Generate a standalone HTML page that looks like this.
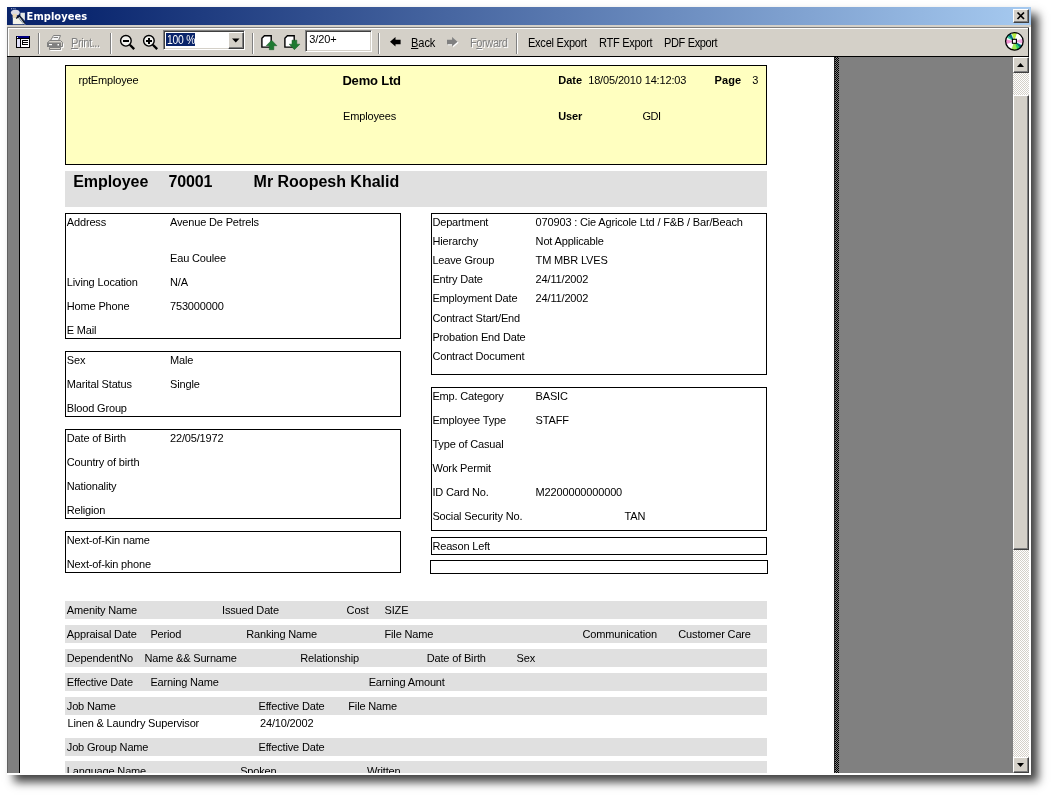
<!DOCTYPE html>
<html><head><meta charset="utf-8"><title>Employees</title>
<style>
*{box-sizing:border-box;margin:0;padding:0}
html,body{width:1054px;height:798px;background:#fff;overflow:hidden}
body{position:relative;font-family:"Liberation Sans",sans-serif;font-size:11px;color:#000}
div,span,svg{position:absolute}
#win{left:7px;top:7px;width:1024px;height:768px;background:#d4d0c8;box-shadow:7px 7px 9px 0 rgba(0,0,0,.75)}
#title{left:7px;top:7px;width:1024px;height:18px;background:linear-gradient(90deg,#0a246a 0%,#0c2870 8%,#a6caf0 100%)}
#sheet{left:20px;top:57px;width:814px;height:716px;background:#fff;overflow:hidden}
.t{white-space:pre;line-height:13px;font-size:11px}
.b{font-weight:bold}
.w{color:#fff}
.cap{color:#fff;font-weight:bold;font-family:"DejaVu Sans Condensed","DejaVu Sans","Liberation Sans",sans-serif}
.box{border:1px solid #000;background:#fff}
.gr{background:#e0e0e0;left:45px;width:702px;height:18px}
.sep{top:33px;width:2px;height:21px;border-left:1px solid #808080;border-right:1px solid #fff}
.dis{color:#808080;text-shadow:1px 1px 0 #fff}
.btn{background:#d4d0c8;border:1px solid;border-color:#fff #404040 #404040 #fff;box-shadow:inset -1px -1px 0 #808080}
.sunk{background:#fff;border:1px solid;border-color:#808080 #fff #fff #808080;box-shadow:inset 1px 1px 0 #404040,inset -1px -1px 0 #d4d0c8}
u{text-decoration:underline}
</style></head><body>
<div id="root" style="left:0;top:0;width:1054px;height:798px;will-change:transform">
<div id="win"></div>
<div id="title"></div>

<svg style="left:10px;top:8px" width="16" height="17" viewBox="0 0 16 17">
<path d="M1 .3h.9v.9h-.9zM2.800 .3h.9v.9h-.9zM4.600 .3h.9v.9h-.9z" fill="#c8d0e8"/>
<ellipse cx="5.300" cy="4.600" rx="4.400" ry="2.900" fill="#dcdce6"/>
<rect x="2.600" y="5.800" width="4.200" height="4" fill="#ead8b4"/>
<path d="M2.800 9.500 H8 L13.500 16.200 H2.800 Z" fill="#f3f3e8"/>
<path d="M10.400 4.800 H14.900 V12.800 L10.400 8 Z" fill="#e6eae6"/>
<path d="M8.500 9.500 L10.500 8.500 L14.800 15 L13.500 16.200 Z" fill="#cdd4d4"/>
<path d="M6.200 10.500 L9.600 7.500" stroke="#101018" stroke-width="1.300" fill="none"/>
<path d="M9.300 7.600 L15 15.600" stroke="#0c1420" stroke-width="1.100" fill="none"/>
<path d="M13.800 15.400 L15 16.600" stroke="#fff" stroke-width="1" fill="none"/>
</svg>

<div class="btn" style="left:1013px;top:9px;width:16px;height:14px"></div>
<svg style="left:1013px;top:9px" width="16" height="14" viewBox="0 0 16 14"><path d="M4.500 3.500 L11 10 M11 3.500 L4.500 10" stroke="#000" stroke-width="1.700" fill="none"/></svg>
<div style="left:7px;top:27px;width:1022px;height:30px;background:#808080"></div>
<div style="left:8px;top:28px;width:1021px;height:28px;background:#fff"></div>
<div style="left:9px;top:29px;width:1019px;height:27px;background:#d4d0c8"></div>
<div style="left:1028px;top:28px;width:1px;height:28px;background:#202020"></div>
<div style="left:7px;top:56px;width:1022px;height:1px;background:#000"></div>
<div style="left:1029px;top:27px;width:2px;height:748px;background:#fff"></div>
<div style="left:7px;top:57px;width:1006px;height:716px;background:#808080"></div>
<div style="left:7px;top:57px;width:1px;height:716px;background:#606060"></div>
<div style="left:19px;top:57px;width:1px;height:716px;background:#000"></div>
<div style="left:834px;top:57px;width:5px;height:716px;background:#404040;background:repeating-conic-gradient(#000 0 25%,#808080 0 50%) 0 0/2px 2px"></div>
<div style="left:834px;top:57px;width:1px;height:716px;background:#202020"></div>
<div style="left:1013px;top:57px;width:16px;height:716px;background:#eae8e4;background:repeating-conic-gradient(#fff 0 25%,#d4d0c8 0 50%) 0 0/2px 2px"></div>
<div class="btn" style="left:1013px;top:57px;width:16px;height:16px"></div>
<svg style="left:1013px;top:57px" width="16" height="16"><path d="M4 10 L11 10 L7.500 6 Z" fill="#000"/></svg>
<div class="btn" style="left:1013px;top:757px;width:16px;height:16px"></div>
<svg style="left:1013px;top:757px" width="16" height="16"><path d="M4 6 L11 6 L7.500 10 Z" fill="#000"/></svg>
<div class="btn" style="left:1013px;top:95px;width:16px;height:455px"></div>
<div class="sep" style="left:38px"></div>
<div class="sep" style="left:110px"></div>
<div class="sep" style="left:252px"></div>
<div class="sep" style="left:378px"></div>
<div class="sep" style="left:516px"></div>
<svg style="left:16px;top:36px" width="14" height="12" viewBox="0 0 14 12" shape-rendering="crispEdges"><rect width="14" height="12" fill="#000"/><rect x="1" y="0" width="12" height="2" fill="#000080"/><rect x="1" y="1" width="1" height="1" fill="#fff"/><rect x="1" y="3" width="3" height="8" fill="#e0e0f8"/><rect x="5" y="3" width="8" height="8" fill="#fff"/><path d="M6 4h6v1h-5v1h5v1h-5v1h5v1h-6z" fill="#000"/></svg>
<svg style="left:47px;top:34px" width="18" height="17" viewBox="0 0 18 17"><g transform="translate(1,1)" stroke="#fff" fill="none"><path d="M2.500 13.500 H13.500 V15.500 H2.500 Z M15.500 8.500 V12.500 H13.500"/></g><g stroke="#808080" fill="none"><path d="M6.500 1.500 H13.500 L11.500 6.500 H3.500 Z" fill="#f4f4f4"/><path d="M6.500 3.500 H11"/><path d="M2.500 6.500 H13.500 L15.500 8.500 V12.500 H13.500 M2.500 6.500 L.5 9"/><rect x=".5" y="9" width="13" height="3.500" fill="#808080"/><path d="M2.500 13.500 H13.500 V15.500 H2.500 Z" fill="#d4d0c8"/></g><rect x="2" y="10" width="3" height="1.200" fill="#fff"/><rect x="10.500" y="10" width="1.500" height="1.500" fill="#fff"/></svg>
<svg style="left:119px;top:34px" width="17" height="17" viewBox="0 0 17 17"><circle cx="6.900" cy="6.800" r="5.300" fill="#f2f2ee" stroke="#000" stroke-width="1.400"/><path d="M10.800 10.700 L15.200 15.100" stroke="#000" stroke-width="2.300"/><path d="M4 7 H10" stroke="#000" stroke-width="2"/></svg>
<svg style="left:142px;top:34px" width="17" height="17" viewBox="0 0 17 17"><circle cx="6.900" cy="6.800" r="5.300" fill="#f2f2ee" stroke="#000" stroke-width="1.400"/><path d="M10.800 10.700 L15.200 15.100" stroke="#000" stroke-width="2.300"/><path d="M4 7 H10 M7 4 V10" stroke="#000" stroke-width="2"/></svg>
<div class="sunk" style="left:163px;top:30px;width:82px;height:20px"></div>
<div style="left:166px;top:33px;width:29px;height:13px;background:#0a246a"></div>
<div class="btn" style="left:228px;top:32px;width:16px;height:17px"></div>
<svg style="left:228px;top:32px" width="16" height="17"><path d="M4 6.500 H11.500 L7.750 10.500 Z" fill="#000"/></svg>
<svg style="left:260px;top:34px" width="18" height="17" viewBox="0 0 18 17"><path d="M1.900 4.200 L4.400 1.700 H11.200 V13.100 H1.900 Z" fill="#fff" stroke="#000" stroke-width="1.400"/><path d="M11.600 6.200 L16.900 11.700 H13.800 V15.700 H9.300 V11.700 H6.200 Z" fill="#1f7a32" stroke="#145a22" stroke-width=".5"/></svg>
<svg style="left:283px;top:34px" width="18" height="17" viewBox="0 0 18 17"><path d="M1.900 4.200 L4.400 1.700 H11.200 V13.100 H1.900 Z" fill="#fff" stroke="#000" stroke-width="1.400"/><path d="M9 6.200 H13.800 V10.200 H16.900 L11.400 15.700 L6.200 10.200 H9 Z" fill="#1f7a32" stroke="#145a22" stroke-width=".5"/></svg>
<div class="sunk" style="left:305px;top:30px;width:67px;height:22px"></div>
<svg style="left:389.700px;top:36.800px" width="11" height="10" viewBox="0 0 11 10"><path d="M0 4.750 L5.500 0 V2.700 H10.600 V7.200 H5.500 V9.500 Z" fill="#000"/></svg>
<svg style="left:447.400px;top:36.800px" width="12" height="11" viewBox="0 0 12 11"><path d="M10.600 4.750 L5.100 0 V2.700 H0 V7.200 H5.100 V9.500 Z" fill="#fff" transform="translate(1,1)"/><path d="M10.600 4.750 L5.100 0 V2.700 H0 V7.200 H5.100 V9.500 Z" fill="#808080"/></svg>
<svg style="left:1004px;top:31px" width="21" height="21" viewBox="0 0 21 21"><circle cx="10.400" cy="10.350" r="8.800" fill="#f4f4f8"/><path d="M10.4 10.35 L7.68 1.98 A8.8 8.8 0 0 1 12.83 1.89 Z" fill="#b4ec40"/><path d="M10.4 10.35 L13.41 18.62 A8.8 8.8 0 0 1 7.39 18.62 Z" fill="#a0e850"/><path d="M10.4 10.35 L2.49 6.49 A8.8 8.8 0 0 1 4.51 3.81 Z" fill="#40d0a0"/><path d="M10.4 10.35 L3.86 4.46 A8.8 8.8 0 0 1 6.82 2.31 Z" fill="#007080"/><path d="M10.4 10.35 L18.17 14.48 A8.8 8.8 0 0 1 15.82 17.28 Z" fill="#007080"/><path d="M10.4 10.35 L16.29 16.89 A8.8 8.8 0 0 1 13.12 18.72 Z" fill="#30d060"/><path d="M10.4 10.35 L18.77 7.63 A8.8 8.8 0 0 1 18.94 12.48 Z" fill="#f0a8e0"/><path d="M10.4 10.35 L2.13 13.36 A8.8 8.8 0 0 1 1.79 8.52 Z" fill="#f090d0"/><path d="M10.4 10.35 L13.41 2.08 A8.8 8.8 0 0 1 18.02 5.95 Z" fill="#fff"/><path d="M10.4 10.35 L6.68 18.33 A8.8 8.8 0 0 1 2.42 14.07 Z" fill="#fff"/><circle cx="10.400" cy="10.350" r="8.800" fill="none" stroke="#000" stroke-width="1.300"/><rect x="8.400" y="8.300" width="4" height="4" fill="#fff" stroke="#000" stroke-width="1.100"/></svg>
<span class="t cap" style="left:26.6px;top:9.5px;letter-spacing:0.053px;font-size:11px;line-height:14px">Employees</span>
<span class="t dis" style="left:71.4px;top:36.0px;letter-spacing:-0.450px;font-size:12px;line-height:14px;transform:scaleX(0.92);transform-origin:0 0"><u>P</u>rint...</span>
<span class="t w" style="left:166.8px;top:33.0px;letter-spacing:-0.248px;font-size:12px;line-height:14px;transform:scaleX(0.86);transform-origin:0 0">100 %</span>
<span class="t " style="left:309.3px;top:32.8px;letter-spacing:-0.129px">3/20+</span>
<span class="t " style="left:411.2px;top:36.0px;letter-spacing:-0.073px;font-size:12px;line-height:14px;transform:scaleX(0.92);transform-origin:0 0"><u>B</u>ack</span>
<span class="t dis" style="left:469.6px;top:36.0px;letter-spacing:-0.454px;font-size:12px;line-height:14px;transform:scaleX(0.92);transform-origin:0 0">F<u>o</u>rward</span>
<span class="t " style="left:528.4px;top:36.0px;letter-spacing:-0.278px;font-size:12px;line-height:14px;transform:scaleX(0.92);transform-origin:0 0">Excel Export</span>
<span class="t " style="left:598.7px;top:36.0px;letter-spacing:-0.308px;font-size:12px;line-height:14px;transform:scaleX(0.92);transform-origin:0 0">RTF Export</span>
<span class="t " style="left:663.9px;top:36.0px;letter-spacing:-0.408px;font-size:12px;line-height:14px;transform:scaleX(0.92);transform-origin:0 0">PDF Export</span>
<div id="sheet">
<div class="box" style="left:45px;top:8px;width:702px;height:100px;background:#ffffc0"></div>
<div class="gr" style="top:114px;height:36px"></div>
<div class="box" style="left:45px;top:156px;width:336px;height:126px"></div>
<div class="box" style="left:45px;top:294px;width:336px;height:66px"></div>
<div class="box" style="left:45px;top:372px;width:336px;height:90px"></div>
<div class="box" style="left:45px;top:474px;width:336px;height:42px"></div>
<div class="box" style="left:411px;top:156px;width:336px;height:162px"></div>
<div class="box" style="left:411px;top:330px;width:336px;height:144px"></div>
<div class="box" style="left:411px;top:480px;width:336px;height:18px"></div>
<div class="box" style="left:410px;top:503px;width:338px;height:14px"></div>
<div class="gr" style="top:544px"></div>
<div class="gr" style="top:568px"></div>
<div class="gr" style="top:592px"></div>
<div class="gr" style="top:616px"></div>
<div class="gr" style="top:640px"></div>
<div class="gr" style="top:681px"></div>
<div class="gr" style="top:704px"></div>
<span class="t " style="left:58.5px;top:17.0px;letter-spacing:-0.160px">rptEmployee</span>
<span class="t b" style="left:322.4px;top:16.0px;letter-spacing:-0.182px;font-size:13px;line-height:15px">Demo Ltd</span>
<span class="t " style="left:323.0px;top:53.0px;letter-spacing:-0.158px">Employees</span>
<span class="t b" style="left:538.3px;top:17.0px;letter-spacing:-0.036px">Date</span>
<span class="t " style="left:568.2px;top:17.0px;letter-spacing:-0.149px">18/05/2010 14:12:03</span>
<span class="t b" style="left:694.4px;top:17.0px;letter-spacing:0.151px">Page</span>
<span class="t " style="left:732.2px;top:17.0px;letter-spacing:-0.160px">3</span>
<span class="t b" style="left:538.3px;top:53.0px;letter-spacing:-0.160px">User</span>
<span class="t " style="left:622.6px;top:53.0px;letter-spacing:-0.554px">GDI</span>
<span class="t b" style="left:53.2px;top:116.0px;letter-spacing:-0.062px;font-size:16px;line-height:18px">Employee</span>
<span class="t b" style="left:148.6px;top:116.0px;letter-spacing:-0.180px;font-size:16px;line-height:18px">70001</span>
<span class="t b" style="left:233.6px;top:116.0px;letter-spacing:-0.011px;font-size:16px;line-height:18px">Mr Roopesh Khalid</span>
<span class="t " style="left:46.8px;top:159.0px;letter-spacing:-0.160px">Address</span>
<span class="t " style="left:150.0px;top:159.0px;letter-spacing:-0.160px">Avenue De Petrels</span>
<span class="t " style="left:150.0px;top:195.0px;letter-spacing:-0.160px">Eau Coulee</span>
<span class="t " style="left:46.8px;top:219.0px;letter-spacing:-0.160px">Living Location</span>
<span class="t " style="left:150.0px;top:219.0px;letter-spacing:-0.160px">N/A</span>
<span class="t " style="left:46.8px;top:243.0px;letter-spacing:-0.160px">Home Phone</span>
<span class="t " style="left:150.0px;top:243.0px;letter-spacing:-0.160px">753000000</span>
<span class="t " style="left:46.8px;top:267.0px;letter-spacing:-0.160px">E Mail</span>
<span class="t " style="left:46.8px;top:297.0px;letter-spacing:-0.160px">Sex</span>
<span class="t " style="left:150.0px;top:297.0px;letter-spacing:-0.160px">Male</span>
<span class="t " style="left:46.8px;top:321.0px;letter-spacing:-0.160px">Marital Status</span>
<span class="t " style="left:150.0px;top:321.0px;letter-spacing:-0.160px">Single</span>
<span class="t " style="left:46.8px;top:345.0px;letter-spacing:-0.160px">Blood Group</span>
<span class="t " style="left:46.8px;top:375.0px;letter-spacing:-0.160px">Date of Birth</span>
<span class="t " style="left:150.0px;top:375.0px;letter-spacing:-0.160px">22/05/1972</span>
<span class="t " style="left:46.8px;top:399.0px;letter-spacing:-0.160px">Country of birth</span>
<span class="t " style="left:46.8px;top:423.0px;letter-spacing:-0.160px">Nationality</span>
<span class="t " style="left:46.8px;top:447.0px;letter-spacing:-0.160px">Religion</span>
<span class="t " style="left:46.8px;top:477.0px;letter-spacing:-0.160px">Next-of-Kin name</span>
<span class="t " style="left:46.8px;top:501.0px;letter-spacing:-0.160px">Next-of-kin phone</span>
<span class="t " style="left:412.4px;top:159.0px;letter-spacing:-0.160px">Department</span>
<span class="t " style="left:515.6px;top:159.0px;letter-spacing:-0.160px">070903 : Cie Agricole Ltd / F&amp;B / Bar/Beach</span>
<span class="t " style="left:412.4px;top:178.0px;letter-spacing:-0.160px">Hierarchy</span>
<span class="t " style="left:515.6px;top:178.0px;letter-spacing:-0.160px">Not Applicable</span>
<span class="t " style="left:412.4px;top:197.0px;letter-spacing:-0.160px">Leave Group</span>
<span class="t " style="left:515.6px;top:197.0px;letter-spacing:-0.160px">TM MBR LVES</span>
<span class="t " style="left:412.4px;top:216.0px;letter-spacing:-0.160px">Entry Date</span>
<span class="t " style="left:515.6px;top:216.0px;letter-spacing:-0.160px">24/11/2002</span>
<span class="t " style="left:412.4px;top:235.0px;letter-spacing:-0.160px">Employment Date</span>
<span class="t " style="left:515.6px;top:235.0px;letter-spacing:-0.160px">24/11/2002</span>
<span class="t " style="left:412.4px;top:255.0px;letter-spacing:-0.160px">Contract Start/End</span>
<span class="t " style="left:412.4px;top:274.0px;letter-spacing:-0.160px">Probation End Date</span>
<span class="t " style="left:412.4px;top:293.0px;letter-spacing:-0.160px">Contract Document</span>
<span class="t " style="left:412.4px;top:333.0px;letter-spacing:-0.160px">Emp. Category</span>
<span class="t " style="left:515.6px;top:333.0px;letter-spacing:-0.160px">BASIC</span>
<span class="t " style="left:412.4px;top:357.0px;letter-spacing:-0.160px">Employee Type</span>
<span class="t " style="left:515.6px;top:357.0px;letter-spacing:-0.160px">STAFF</span>
<span class="t " style="left:412.4px;top:381.0px;letter-spacing:-0.160px">Type of Casual</span>
<span class="t " style="left:412.4px;top:405.0px;letter-spacing:-0.160px">Work Permit</span>
<span class="t " style="left:412.4px;top:429.0px;letter-spacing:-0.160px">ID Card No.</span>
<span class="t " style="left:515.6px;top:429.0px;letter-spacing:-0.160px">M2200000000000</span>
<span class="t " style="left:412.4px;top:453.0px;letter-spacing:-0.160px">Social Security No.</span>
<span class="t " style="left:412.4px;top:483.0px;letter-spacing:-0.160px">Reason Left</span>
<span class="t " style="left:604.6px;top:453.0px;letter-spacing:-0.160px">TAN</span>
<span class="t " style="left:46.8px;top:547.0px;letter-spacing:-0.160px">Amenity Name</span>
<span class="t " style="left:202.0px;top:547.0px;letter-spacing:-0.160px">Issued Date</span>
<span class="t " style="left:326.6px;top:547.0px;letter-spacing:-0.160px">Cost</span>
<span class="t " style="left:364.5px;top:547.0px;letter-spacing:-0.160px">SIZE</span>
<span class="t " style="left:46.8px;top:571.0px;letter-spacing:-0.160px">Appraisal Date</span>
<span class="t " style="left:130.4px;top:571.0px;letter-spacing:-0.160px">Period</span>
<span class="t " style="left:226.2px;top:571.0px;letter-spacing:-0.160px">Ranking Name</span>
<span class="t " style="left:364.5px;top:571.0px;letter-spacing:-0.160px">File Name</span>
<span class="t " style="left:562.5px;top:571.0px;letter-spacing:-0.160px">Communication</span>
<span class="t " style="left:658.3px;top:571.0px;letter-spacing:-0.160px">Customer Care</span>
<span class="t " style="left:46.8px;top:595.0px;letter-spacing:-0.160px">DependentNo</span>
<span class="t " style="left:124.4px;top:595.0px;letter-spacing:-0.160px">Name &amp;&amp; Surname</span>
<span class="t " style="left:280.3px;top:595.0px;letter-spacing:-0.160px">Relationship</span>
<span class="t " style="left:406.7px;top:595.0px;letter-spacing:-0.160px">Date of Birth</span>
<span class="t " style="left:496.5px;top:595.0px;letter-spacing:-0.160px">Sex</span>
<span class="t " style="left:46.8px;top:619.0px;letter-spacing:-0.160px">Effective Date</span>
<span class="t " style="left:130.4px;top:619.0px;letter-spacing:-0.160px">Earning Name</span>
<span class="t " style="left:348.7px;top:619.0px;letter-spacing:-0.160px">Earning Amount</span>
<span class="t " style="left:46.8px;top:643.0px;letter-spacing:-0.160px">Job Name</span>
<span class="t " style="left:238.5px;top:643.0px;letter-spacing:-0.160px">Effective Date</span>
<span class="t " style="left:328.3px;top:643.0px;letter-spacing:-0.160px">File Name</span>
<span class="t " style="left:47.5px;top:660.0px;letter-spacing:-0.160px">Linen &amp; Laundry Supervisor</span>
<span class="t " style="left:240.0px;top:660.0px;letter-spacing:-0.160px">24/10/2002</span>
<span class="t " style="left:46.8px;top:684.0px;letter-spacing:-0.160px">Job Group Name</span>
<span class="t " style="left:238.5px;top:684.0px;letter-spacing:-0.160px">Effective Date</span>
<span class="t " style="left:46.8px;top:708.0px;letter-spacing:-0.160px">Language Name</span>
<span class="t " style="left:220.2px;top:708.0px;letter-spacing:-0.160px">Spoken</span>
<span class="t " style="left:347.0px;top:708.0px;letter-spacing:-0.160px">Written</span>
</div>
<div style="left:7px;top:773px;width:1024px;height:2px;background:#fff"></div>
</div>
</body></html>
